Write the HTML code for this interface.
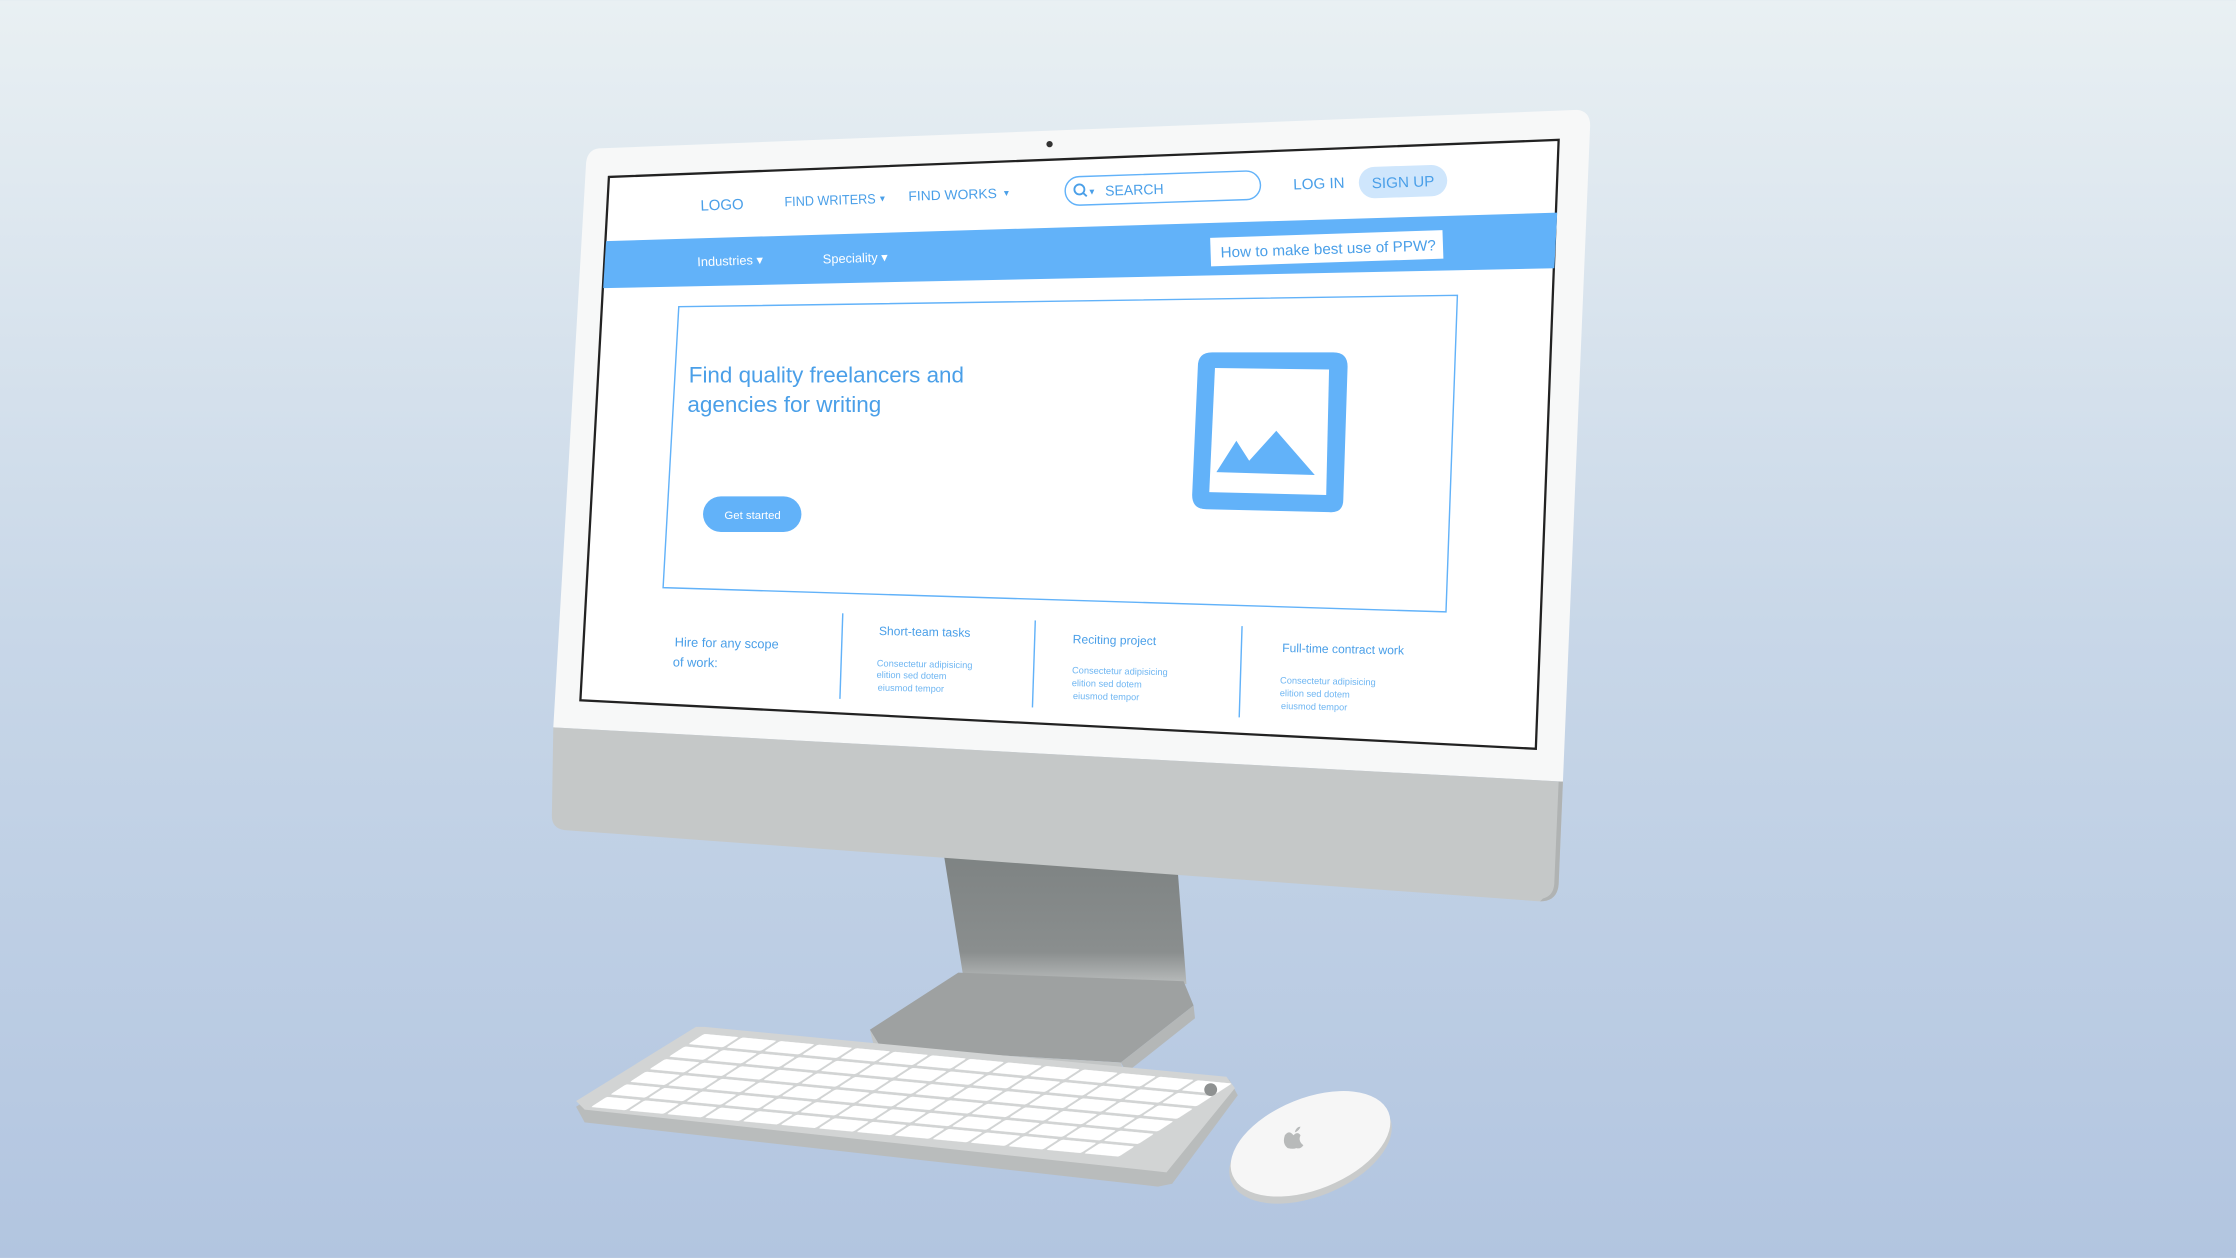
<!DOCTYPE html>
<html><head><meta charset="utf-8"><style>
html,body{margin:0;padding:0;width:2236px;height:1258px;overflow:hidden;background:#d0dcea}
svg{display:block}
text{font-family:"Liberation Sans",sans-serif;fill:#4a9fe8}
</style></head><body>
<svg width="2236" height="1258" viewBox="0 0 1568 882" xmlns="http://www.w3.org/2000/svg">
<defs>
<linearGradient id="bg" x1="0" y1="0" x2="0" y2="1">
<stop offset="0" stop-color="#e9f0f3"/><stop offset="0.5" stop-color="#c8d7e8"/><stop offset="1" stop-color="#b2c5e0"/></linearGradient>
<linearGradient id="neck" x1="0" y1="0" x2="0" y2="1">
<stop offset="0" stop-color="#7e8383"/><stop offset="0.75" stop-color="#8a8e8e"/><stop offset="1" stop-color="#b9bcbc"/></linearGradient>
<pattern id="keys" width="26.6" height="8.83" patternUnits="userSpaceOnUse">
<rect x="1" y="0.8" width="24.4" height="7.2" rx="1" fill="#fff"/></pattern>
</defs>
<rect width="1568" height="882" fill="url(#bg)"/>
<!-- stand -->
<polygon points="662,600 826,612 832,690 676,688" fill="url(#neck)"/>
<polygon points="672,682 830,688 837,705 786,745 618,735 610,722" fill="#9ea1a1"/>
<polygon points="610,722 618,735 786,745 788,752 615,742" fill="#c2c5c5"/>
<polygon points="786,745 837,705 838,714 790,752" fill="#b4b7b7"/>
<!-- monitor body -->
<path d="M420,104 L1106,77 Q1116,78 1115,90 L1096,548 L388,510 L411,114 Q412,105 420,104 Z" fill="#f7f8f8"/>
<path d="M388,510 L1096,548 L1093,620 Q1092,632 1080,632 L396,582 Q387,581 387,572 Z" fill="#c5c8c8"/>
<path d="M1096,548 L1093,620 Q1092,632 1080,632 L1082,630 Q1090,628 1090,618 L1093,548Z" fill="#b0b3b3"/>
<circle cx="736" cy="101" r="2.2" fill="#333"/>
<!-- screen -->
<polygon points="427,124 1093,98 1077,525 407,491" fill="#fff" stroke="#222" stroke-width="1.6"/>
<!-- blue bar -->
<polygon points="425,169 1092,149 1090,188 423,202" fill="#62b2f9"/>
<!-- header text -->
<g transform="rotate(-1.9 750 135)">
<text x="491" y="139" font-size="10.5">LOGO</text>
<text x="550" y="138" font-size="9.5" textLength="64" lengthAdjust="spacingAndGlyphs">FIND WRITERS</text>
<text x="617" y="137" font-size="7">▾</text>
<text x="637" y="137" font-size="9.5" textLength="62" lengthAdjust="spacingAndGlyphs">FIND WORKS</text>
<text x="704" y="136" font-size="7">▾</text>
<rect x="747" y="124" width="137" height="20" rx="10" fill="none" stroke="#62b2f9" stroke-width="1"/>
<circle cx="757" cy="133" r="3.5" fill="none" stroke="#4a9fe8" stroke-width="1.3"/>
<line x1="759.5" y1="135.5" x2="762" y2="138" stroke="#4a9fe8" stroke-width="1.3"/>
<text x="764" y="137" font-size="7">▾</text>
<text x="775" y="138" font-size="10" textLength="41" lengthAdjust="spacingAndGlyphs">SEARCH</text>
<text x="907" y="138" font-size="10.5" textLength="36" lengthAdjust="spacingAndGlyphs">LOG IN</text>
<rect x="953" y="124" width="62" height="22" rx="11" fill="#cfe6fc"/>
<text x="962" y="139" font-size="10.5" textLength="44" lengthAdjust="spacingAndGlyphs">SIGN UP</text>
</g>
<g transform="rotate(-1.9 750 180)">
<text x="489" y="178" font-size="9" style="fill:#fff">Industries ▾</text>
<text x="577" y="179" font-size="9" style="fill:#fff">Speciality ▾</text>
<rect x="849" y="170" width="163" height="20" fill="#fff"/>
<text x="856" y="184" font-size="10.5" textLength="151" lengthAdjust="spacingAndGlyphs">How to make best use of PPW?</text>
</g>
<!-- hero box -->
<polygon points="476,215 1022,207 1014,429 465,412" fill="none" stroke="#62b2f9" stroke-width="1"/>
<text x="483" y="268" font-size="15.5" textLength="193" lengthAdjust="spacingAndGlyphs">Find quality freelancers and</text>
<text x="482" y="289" font-size="15.5" textLength="136" lengthAdjust="spacingAndGlyphs">agencies for writing</text>
<rect x="493" y="348" width="69" height="25" rx="12.5" fill="#62b2f9"/>
<text x="508" y="364" font-size="8" style="fill:#fff">Get started</text>
<path d="M850,247 L935,247 Q945,247 945,257 L942,350 Q942,360 932,359 L846,357 Q836,357 836,347 L840,257 Q840,247 850,247 Z" fill="#62b2f9"/>
<polygon points="852,258 932,259 930,347 848,345" fill="#fff"/>
<polygon points="853,331 867,309 876,323 895,302 922,333" fill="#62b2f9"/>
<!-- bottom section -->
<line x1="591" y1="430" x2="589" y2="490" stroke="#62b2f9"/>
<line x1="726" y1="435" x2="724" y2="496" stroke="#62b2f9"/>
<line x1="871" y1="439" x2="869" y2="503" stroke="#62b2f9"/>
<g transform="rotate(1.2 750 460)">
<text x="473" y="459" font-size="9">Hire for any scope</text>
<text x="472" y="473" font-size="9">of work:</text>
<text x="616" y="448" font-size="8.5">Short-team tasks</text>
<text x="615" y="470" font-size="6.5" style="fill:#6fb6f2">Consectetur adipisicing</text>
<text x="615" y="478" font-size="6.5" style="fill:#6fb6f2">elition sed dotem</text>
<text x="616" y="487" font-size="6.5" style="fill:#6fb6f2">eiusmod tempor</text>
<text x="752" y="451" font-size="8.5">Reciting project</text>
<text x="752" y="472" font-size="6.5" style="fill:#6fb6f2">Consectetur adipisicing</text>
<text x="752" y="481" font-size="6.5" style="fill:#6fb6f2">elition sed dotem</text>
<text x="753" y="490" font-size="6.5" style="fill:#6fb6f2">eiusmod tempor</text>
<text x="899" y="454" font-size="8.5">Full-time contract work</text>
<text x="898" y="476" font-size="6.5" style="fill:#6fb6f2">Consectetur adipisicing</text>
<text x="898" y="485" font-size="6.5" style="fill:#6fb6f2">elition sed dotem</text>
<text x="899" y="494" font-size="6.5" style="fill:#6fb6f2">eiusmod tempor</text>
</g>
<!-- keyboard -->
<polygon points="494,721 862,757 868,768 822,830 812,832 410,787 404,776 488,722" fill="#b9bcbc"/>
<polygon points="494,720 860,755 866,763 818,822 410,778 404,772 488,720" fill="#d2d4d4"/>
<g transform="matrix(1,0.094,-1.547,1,494,724)">
<rect x="0" y="0" width="373" height="53" fill="url(#keys)"/>
</g>
<circle cx="849" cy="764" r="4.5" fill="#8e9191"/>
<!-- mouse -->
<ellipse cx="919" cy="806" rx="60" ry="33" transform="rotate(-22 919 806)" fill="#c9cbcb"/>
<ellipse cx="919" cy="802" rx="59" ry="32" transform="rotate(-22 919 802)" fill="#f6f6f6"/>
<path d="M907,796 Q904,792 901,796 Q899,802 903,805 Q907,806 909,805 Q912,806 914,803 Q910,800 912,796 Q910,793 907,796Z M908,794 Q909,790 912,790 Q911,793 908,794Z" fill="#b8baba"/>
</svg>
</body></html>
